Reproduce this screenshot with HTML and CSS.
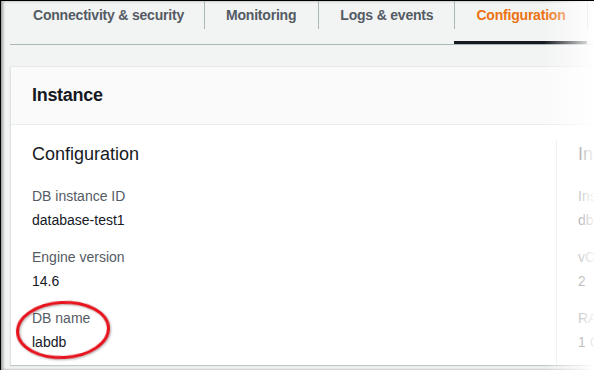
FILE: index.html
```html
<!DOCTYPE html>
<html lang="en">
<head>
    <meta charset="UTF-8">
    <meta name="viewport" content="width=device-width, initial-scale=1.0">
    <title>Configuration</title>
    <link rel="stylesheet" href="styles.css">
</head>
<body>
    <div class="screen">
        <div class="tabs">
            <div class="tab"><span class="tab-label">Connectivity &amp; security</span></div>
            <div class="tab"><span class="tab-label">Monitoring</span></div>
            <div class="tab"><span class="tab-label">Logs &amp; events</span></div>
            <div class="tab active"><span class="tab-label">Configuration</span></div>
            <div class="tab"><span class="tab-label">Maintenance &amp; backups</span></div>
        </div>

        <section class="card">
            <header class="card-head">
                <h2>Instance</h2>
            </header>
            <div class="card-body">
                <div class="col">
                    <h3>Configuration</h3>
                    <dl class="fields">
                        <div class="field">
                            <dt>DB instance ID</dt>
                            <dd>database-test1</dd>
                        </div>
                        <div class="field">
                            <dt>Engine version</dt>
                            <dd>14.6</dd>
                        </div>
                        <div class="field">
                            <dt>DB name</dt>
                            <dd>labdb</dd>
                        </div>
                    </dl>
                </div>
                <div class="col">
                    <h3>Instance class</h3>
                    <dl class="fields">
                        <div class="field">
                            <dt>Instance class</dt>
                            <dd>db.t3.micro</dd>
                        </div>
                        <div class="field">
                            <dt>vCPU</dt>
                            <dd>2</dd>
                        </div>
                        <div class="field">
                            <dt>RAM</dt>
                            <dd>1 GB</dd>
                        </div>
                    </dl>
                </div>
            </div>
        </section>

        <!-- red highlight drawn over the screenshot -->
        <svg class="mark" width="100" height="64" viewBox="0 0 100 64">
            <ellipse cx="49" cy="31" rx="45.5" ry="27.5" transform="rotate(-3 49 31)" />
        </svg>

        <div class="fade"></div>
    </div>
</body>
</html>
```

FILE: styles.css
```css
* {
    margin: 0;
    padding: 0;
    box-sizing: border-box;
}

body {
    font-family: 'Liberation Sans', Arial, sans-serif;
    background: #fff;
    color: #16191f;
}

.screen {
    position: relative;
    width: 594px;
    height: 370px;
    overflow: hidden;
    background: #f2f3f3;
    border-top: 1px solid #000;
    border-left: 1px solid #000;
    box-shadow: inset 2px 0 3px rgba(0, 0, 0, 0.35);
}

/* tabs */

.tabs {
    display: flex;
    margin-left: 9px;
    padding-left: 2px;
    border-bottom: 1px solid #aab7b8;
    white-space: nowrap;
}

.tab {
    flex: none;
    padding-bottom: 12px;
    border-bottom: 3px solid transparent;
}

.tab-label {
    display: block;
    padding: 4px 21px;
    font-size: 14px;
    line-height: 20px;
    font-weight: 700;
    letter-spacing: -0.2px;
    color: #545b64;
    border-left: 1px solid #aab7b8;
}

.tab:first-child .tab-label {
    border-left: none;
    padding-right: 20px;
}

.tab:nth-child(2) .tab-label {
    padding-right: 22px;
}

.tab.active {
    border-bottom-color: #16191f;
}

.tab.active .tab-label {
    color: #ec7211;
}

/* card */

.card {
    width: 700px;
    margin: 21px 0 0 9px;
    background: #fff;
    border-top: 1px solid #e6e9e9;
    border-left: 1px solid #e0e4e4;
    box-shadow: 0 1px 1px 0 rgba(0, 28, 36, 0.2);
}

.card-head {
    padding: 18px 21px 19px;
    background: #fafafa;
    border-bottom: 1px solid #eaeded;
}

.card-head h2 {
    font-size: 18px;
    line-height: 20px;
    font-weight: 700;
    letter-spacing: -0.3px;
}

.card-body {
    display: flex;
    padding: 15px 0 0 21px;
}

.col {
    flex: none;
    padding: 0 21px 13px;
    border-left: 1px solid #eaeded;
}

.col:first-child {
    width: 524px;
    padding-left: 0;
    border-left: none;
}

.col h3 {
    font-size: 18px;
    line-height: 28px;
    font-weight: 400;
    white-space: nowrap;
}

.fields {
    display: flex;
    flex-direction: column;
    gap: 17px;
    margin-top: 18px;
}

.field dt {
    font-size: 14px;
    line-height: 20px;
    color: #545b64;
    white-space: nowrap;
}

.field dd {
    margin-top: 4px;
    font-size: 14px;
    line-height: 20px;
    color: #16191f;
    white-space: nowrap;
}

/* overlays */

.mark {
    position: absolute;
    left: 13px;
    top: 298px;
    overflow: visible;
}

.mark ellipse {
    fill: none;
    stroke: #e8101a;
    stroke-width: 3px;
    filter: drop-shadow(1px 1px 1px rgba(0, 0, 0, 0.3));
}

.fade {
    position: absolute;
    top: -1px;
    right: 0;
    width: 50px;
    height: 372px;
    background: linear-gradient(to right, rgba(255, 255, 255, 0), rgba(255, 255, 255, 0.95));
}
```
